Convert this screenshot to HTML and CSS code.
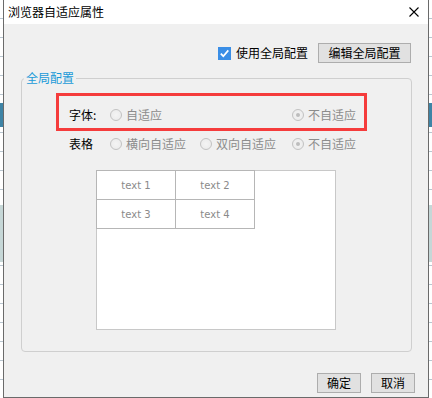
FILE: index.html
```html
<!DOCTYPE html>
<html>
<head>
<meta charset="utf-8">
<title>浏览器自适应属性</title>
<link rel="stylesheet" href="styles.css">
</head>
<body>
<div class="dialog">
  <div class="title-bar">
    <span class="title">浏览器自适应属性</span>
    <svg class="close" width="10" height="10" viewBox="0 0 10 10">
      <path d="M0.5 0.5 L9.5 9.5 M9.5 0.5 L0.5 9.5" stroke="#000" stroke-width="1.1" fill="none"/>
    </svg>
  </div>

  <div class="top-row">
    <span class="check">
      <svg width="13" height="13" viewBox="0 0 13 13">
        <rect x="0" y="0" width="13" height="13" fill="#3a8ee6"/>
        <path d="M2.8 6.6 L5.3 9.2 L10.3 3.4" stroke="#fff" stroke-width="1.7" fill="none"/>
      </svg>
    </span>
    <span class="check-label">使用全局配置</span>
    <button class="btn btn-edit">编辑全局配置</button>
  </div>

  <div class="group">
    <div class="legend">全局配置</div>

    <div class="highlight">
      <div class="opt-row">
        <span class="opt-label">字体:</span>
        <span class="radio"><i class="dot"></i>自适应</span>
        <span></span>
        <span class="radio"><i class="dot on"></i>不自适应</span>
      </div>
    </div>

    <div class="opt-row second">
      <span class="opt-label">表格</span>
      <span class="radio"><i class="dot"></i>横向自适应</span>
      <span class="radio"><i class="dot"></i>双向自适应</span>
      <span class="radio"><i class="dot on"></i>不自适应</span>
    </div>

    <div class="preview">
      <div class="cells">
        <div class="cell">text 1</div>
        <div class="cell">text 2</div>
        <div class="cell">text 3</div>
        <div class="cell">text 4</div>
      </div>
    </div>
  </div>

  <div class="footer">
    <button class="btn btn-small">确定</button>
    <button class="btn btn-small">取消</button>
  </div>
</div>
</body>
</html>
```

FILE: styles.css
```css
/* the spreadsheet behind the dialog, only a sliver shows on each side */
html, body {
  margin: 0;
  padding: 0;
  height: 398px;
  overflow: hidden;
}

body {
  font-family: "Noto Sans CJK SC", "Noto Sans", sans-serif;
  font-size: 12px;
  background:
    linear-gradient(to bottom,
      transparent 0, transparent 103px,
      #3e84a6 103px, #3e84a6 127px,
      transparent 127px, transparent 205px,
      #c6d7d7 205px, #c6d7d7 262px,
      transparent 262px),
    repeating-linear-gradient(to bottom,
      #ffffff 0, #ffffff 18px, #b9c6d0 18px, #b9c6d0 19px);
}

.dialog {
  margin-left: 3px;
  margin-top: -1px;
  width: 426px;
  height: 399px;
  box-sizing: border-box;
  border: 1px solid #6a6a6a;
  background: #f0f0f0;
}

.title-bar {
  height: 24px;
  background: #fff;
  display: flex;
  align-items: center;
  justify-content: space-between;
  padding: 0 9px 0 4px;
}

.title {
  line-height: 24px;
  color: #000;
}

.close {
  display: block;
}

.top-row {
  display: flex;
  justify-content: flex-end;
  align-items: center;
  height: 20px;
  padding: 19px 17px 0 0;
}

.check svg {
  display: block;
}

.check-label {
  margin-left: 5px;
  margin-right: 10px;
  line-height: 20px;
}

.btn {
  font-family: "Noto Sans CJK SC", "Noto Sans", sans-serif;
  font-size: 12px;
  color: #000;
  background: #e1e1e1;
  border: 1px solid #adadad;
  border-radius: 0;
  padding: 0;
  height: 20px;
  line-height: 18px;
}

.btn-edit {
  width: 93px;
}

/* the group box with its caption sitting on the top border */
.group {
  margin: 15px 16px 0 17px;
  height: 274px;
  box-sizing: border-box;
  border: 1px solid #cfcfcf;
  border-radius: 4px;
}

.legend {
  width: max-content;
  margin: -9px 0 0 2px;
  padding: 0 2px;
  line-height: 16px;
  background: #f0f0f0;
  color: #1a9ad8;
}

.highlight {
  margin: 7px 0 0 34px;
  width: 311px;
  height: 38px;
  box-sizing: border-box;
  border: 3px solid #f53c3c;
  padding: 11px 0 0 10px;
}

.opt-row {
  display: grid;
  grid-template-columns: 41px 90px 92px auto;
  align-items: center;
  height: 16px;
}

.opt-row.second {
  margin: 5px 0 0 47px;
}

.opt-label {
  color: #000;
  line-height: 16px;
}

.radio {
  display: flex;
  align-items: center;
  color: #8c8c8c;
  line-height: 16px;
  white-space: nowrap;
}

.dot {
  width: 12px;
  height: 12px;
  box-sizing: border-box;
  border: 1px solid #c2c2c2;
  border-radius: 50%;
  background: radial-gradient(circle, #f4f4f4 0, #e9e9e9 100%);
  margin-right: 4px;
  position: relative;
}

.dot.on::after {
  content: "";
  position: absolute;
  left: 3px;
  top: 3px;
  width: 4px;
  height: 4px;
  border-radius: 50%;
  background: #bdbdbd;
}

.preview {
  margin: 18px 0 0 74px;
  width: 240px;
  height: 160px;
  box-sizing: border-box;
  border: 1px solid #c8c8c8;
  background: #fff;
}

.cells {
  display: grid;
  grid-template-columns: 79px 79px;
  margin: -1px 0 0 -1px;
  width: max-content;
  border-left: 1px solid #b6b6b6;
  border-top: 1px solid #b6b6b6;
}

.cell {
  height: 28px;
  border-right: 1px solid #b6b6b6;
  border-bottom: 1px solid #b6b6b6;
  display: flex;
  align-items: center;
  justify-content: center;
  font-family: "DejaVu Sans", sans-serif;
  font-size: 10px;
  color: #8a8a8a;
}

.footer {
  display: flex;
  justify-content: flex-end;
  gap: 10px;
  padding: 21px 13px 0 0;
}

.btn-small {
  width: 44px;
}
```
